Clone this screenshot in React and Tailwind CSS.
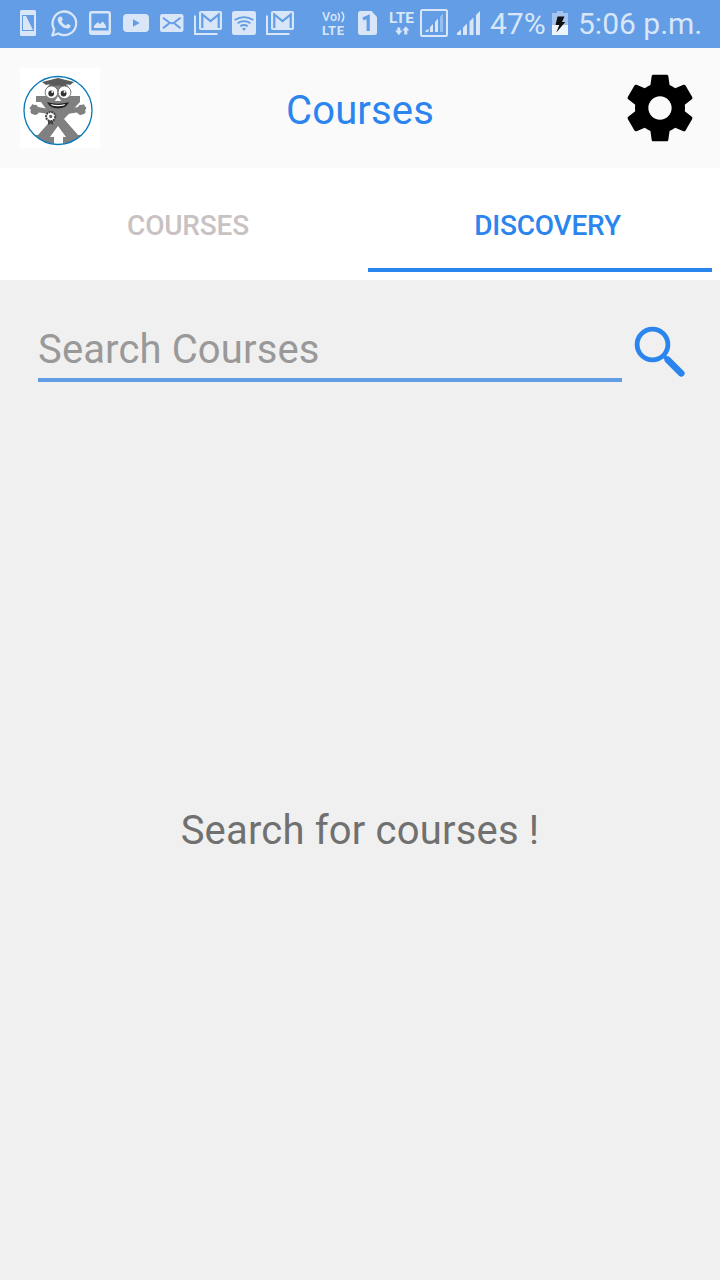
import React from "react";

const GMAIL_BACK = "M195 15.5V34H217.5";

function Slot({ box, width, children }) {
  return (
    <svg className="h-12 shrink-0" width={width} height="48" viewBox={box} fill="none" aria-hidden="true">
      {children}
    </svg>
  );
}

function Gmail({ box }) {
  return (
    <Slot box={box} width={36}>
      <path d={GMAIL_BACK} stroke="#d8e6f8" strokeWidth="2" />
      <rect x="199" y="11" width="23" height="19" rx="1.8" fill="#d8e6f8" />
      <path d="M202.3 28V14.5L210.5 21L218.7 14.5V28" stroke="#629de6" strokeWidth="2.2" />
    </Slot>
  );
}

function StatusBar() {
  return (
    <div className="flex h-12 w-full bg-[#629de6] pl-2.5 text-[#d8e6f8]">
      <Slot box="10 0 36 48" width={36}>
        <rect x="20" y="10" width="16" height="26" rx="1.5" fill="#d8e6f8" />
        <path d="M22 15H34V31H22Z" fill="#629de6" />
        <path d="M23 16H26L33 30H23Z" fill="#d8e6f8" />
      </Slot>
      <Slot box="46 0 36 48" width={36}>
        <path d="M52.3 35.5L54.2 29.3A11.8 11.8 0 1 1 58.4 33.5Z" stroke="#d8e6f8" strokeWidth="2.3" strokeLinejoin="round" />
        <path d="M60 16.5L61.8 16.8L62.8 19.8L61.5 21.5Q63.1 24.4 66 25.5L67.7 23.8L70.5 25.3Q70.8 28.1 67.8 28.6C62.5 28.6 57.6 23 57.7 19.5Q57.7 17.3 60 16.5Z" fill="#d8e6f8" />
      </Slot>
      <Slot box="82 0 36 48" width={36}>
        <rect x="90.2" y="12.2" width="19.6" height="21.6" rx="1.5" stroke="#d8e6f8" strokeWidth="2.4" />
        <path d="M91 30.5H109V34H91Z" fill="#d8e6f8" />
        <path d="M94 28V25.7L98 22L99.7 24.2L102.8 21.5L106 25.7V28Z" fill="#d8e6f8" />
      </Slot>
      <Slot box="118 0 36 48" width={36}>
        <rect x="123" y="14" width="26" height="18" rx="4" fill="#d8e6f8" />
        <path d="M133 19.3V26.7L139.7 23Z" fill="#629de6" />
      </Slot>
      <Slot box="154 0 36 48" width={36}>
        <rect x="160" y="14" width="23.5" height="18" rx="2.2" fill="#d8e6f8" />
        <path d="M163 17.8L169.3 22.5Q171.8 24 174.3 22.5L180.5 17.8M163 28.3L169 23.5M180.5 28.3L174.5 23.5" stroke="#629de6" strokeWidth="2" />
      </Slot>
      <Gmail box="190 0 36 48" />
      <Slot box="226 0 36 48" width={36}>
        <rect x="232" y="11" width="24" height="24" rx="2.5" fill="#d8e6f8" />
        <path d="M234.7 20Q244 14.2 253.3 20M237.6 23.2Q244 19 250.4 23.2M240.3 26.2Q244 23.7 247.7 26.2" stroke="#629de6" strokeWidth="1.9" />
        <path d="M242 28.3Q244 27.3 246 28.3L244 31Z" fill="#629de6" />
      </Slot>
      <Gmail box="190 0 36 48" />

      <div className="ml-[24px] flex w-[28px] shrink-0 flex-col pt-[10px] font-['Roboto',sans-serif] text-[13px] leading-[14px] font-bold">
        <div className="flex h-[14px] items-start text-[12.5px] font-medium">
          <span className="tracking-[0.2px]">Vo</span>
          <svg width="9" height="14" viewBox="0 -0.5 9 14" fill="none" aria-hidden="true">
            <path d="M1 2.5Q3.8 6.5 1 10.3M4.7 1.3Q8.8 6.5 4.7 11.5" stroke="#d8e6f8" strokeWidth="1.5" />
          </svg>
        </div>
        <span className="tracking-[0.5px]">LTE</span>
      </div>
      <Slot box="350 0 36 48" width={36}>
        <path d="M360.5 11H371.5L377 17V32.5Q377 35 374.5 35H360.5Q358 35 358 32.5V13.5Q358 11 360.5 11Z" fill="#d8e6f8" />
        <path d="M363 19L368.2 16.7V31" stroke="#629de6" strokeWidth="3.2" />
      </Slot>
      <div className="flex w-[33px] shrink-0 flex-col pt-[11px] pl-[3px] font-['Roboto',sans-serif] text-[15.5px] leading-[14px] font-bold">
        <span>LTE</span>
        <svg className="ml-[6px] mt-px" width="16" height="11" viewBox="0 0 16 11" fill="#d8e6f8" aria-hidden="true">
          <path d="M2.3 1.5H5.3V4.5H7.4L3.8 9.3L.2 4.5H2.3ZM9.3 8.5V4.5H7.2L10.8 .2L14.4 4.5H12.3V8.5Z" />
        </svg>
      </div>
      <Slot box="419 0 70 48" width={70}>
        <rect x="421" y="10" width="26" height="26" rx="1.5" stroke="#d8e6f8" strokeWidth="2" />
        <path d="M425.5 32V30.5L428.5 29V32ZM430 32V27L433 24V32ZM435 32V22L438 18.5V32Z" fill="#d8e6f8" />
        <path d="M440 32V17L443 13.5V32Z" fill="#97bfef" />
        <path d="M457 35V33L461 29.5V35ZM463 35V27.5L467 23.5V35ZM469.5 35V21.5L473.5 17.5V35ZM476 35V15L480 11V35Z" fill="#d8e6f8" />
      </Slot>
      <span className="w-[62px] shrink-0 pl-px font-['Roboto',sans-serif] text-[30px] leading-[48px] whitespace-nowrap">47%</span>
      <Slot box="551 0 27 48" width={27}>
        <path d="M552 13H557V11H563V13H568V25H552Z" fill="#a3c5f0" />
        <path d="M552 25H568V35H552Z" fill="#edf4fd" />
        <path d="M557.5 16.5H564.5L562 22H565.3L556.3 32.5L559.3 25H555.5Z" fill="#111" />
      </Slot>
      <span className="shrink-0 font-['Roboto',sans-serif] text-[30px] leading-[48px] whitespace-nowrap">5:06 p.m.</span>
    </div>
  );
}

function Mascot() {
  return (
    <svg className="h-20 w-20" viewBox="0 0 80 80" aria-label="Profile">
      <rect width="80" height="80" fill="#fff" />
      <g fill="#808080">
        <path d="M16 28H60V34L44 51L58 67H62Q51 76 43 76V69H46L38 58L30 69H34V76Q24 76 14 67H18L33 50L26 41L21 34H16Z" />
        <path d="M18 39L29 41V46L19 44.5Q17 48 13.5 46.5Q9 45 11 42Q8 40 11.5 38Q11 35 14.5 37Q16.5 36 18 39Z" />
        <path d="M58 39L47 41V46L57 44.5Q59 48 62.5 46.5Q67 45 65 42Q68 40 64.5 38Q65 35 61.5 37Q59.5 36 58 39Z" />
        <rect x="27" y="14" width="22" height="28" rx="8" />
      </g>
      <path d="M22 14L38 10L54 14L50 17L46 16V19Q38 16 30 19V16L26 17Z" fill="#5a5a5a" />
      <circle cx="31.5" cy="24.3" r="6.4" fill="#fff" stroke="#777" strokeWidth="1" />
      <circle cx="44.5" cy="24.3" r="6.4" fill="#fff" stroke="#777" strokeWidth="1" />
      <circle cx="31.2" cy="25.5" r="2.9" fill="#333" />
      <circle cx="43.6" cy="25.5" r="2.9" fill="#333" />
      <circle cx="32.3" cy="24" r="1" fill="#fff" />
      <circle cx="44.5" cy="24" r="1" fill="#fff" />
      <path d="M34.8 33L38 28.5L41.2 33Z" fill="#fff" />
      <path d="M27 34.3Q38 37 49 34.3Q46 40.5 38 40.5Q30 40.5 27 34.3Z" fill="#222" />
      <path d="M30.5 36Q38 37.8 45.5 36L44 37.6Q38 39 32 37.6Z" fill="#fff" />
      <path d="M28 52V57L30.5 55.5L33 57V52Z" fill="#444" />
      <circle cx="30.7" cy="48.5" r="4.6" fill="#fff" stroke="#444" strokeWidth="2" strokeDasharray="2 .7" />
      <circle cx="30.7" cy="48.5" r="1.7" fill="#666" />
      <circle cx="38" cy="42.5" r="34" fill="none" stroke="#0878b8" strokeWidth="1.3" />
    </svg>
  );
}

export default function App() {
  return (
    <div className="flex h-[1280px] w-[720px] flex-col overflow-hidden bg-[#f0f0f0] font-['Roboto',sans-serif]">
      <StatusBar />
      <header className="flex h-[120px] shrink-0 items-center justify-between bg-[#fafafa] px-5">
        <Mascot />
        <h1 className="pt-1.5 text-[40px] leading-[48px] tracking-[0.15px] text-[#2b85ee]">Courses</h1>
        <svg className="h-20 w-20" viewBox="0 0 24 24" fill="#000" aria-label="Settings">
          <path d="M19.43 12.98c.04-.32.07-.64.07-.98s-.03-.66-.07-.98l2.11-1.65c.19-.15.24-.42.12-.64l-2-3.46c-.12-.22-.39-.3-.61-.22l-2.49 1c-.52-.4-1.08-.73-1.69-.98l-.38-2.65C14.46 2.18 14.25 2 14 2h-4c-.25 0-.46.18-.49.42l-.38 2.65c-.61.25-1.17.59-1.69.98l-2.49-1c-.23-.09-.49 0-.61.22l-2 3.46c-.13.22-.07.49.12.64l2.11 1.65c-.04.32-.07.65-.07.98s.03.66.07.98l-2.11 1.65c-.19.15-.24.42-.12.64l2 3.46c.12.22.39.3.61.22l2.49-1c.52.4 1.08.73 1.69.98l.38 2.65c.03.24.24.42.49.42h4c.25 0 .46-.18.49-.42l.38-2.65c.61-.25 1.17-.59 1.69-.98l2.49 1c.23.09.49 0 .61-.22l2-3.46c.12-.22.07-.49-.12-.64l-2.11-1.65zM12 15.5c-1.93 0-3.5-1.57-3.5-3.5s1.57-3.5 3.5-3.5 3.5 1.57 3.5 3.5-1.57 3.5-3.5 3.5z" />
        </svg>
      </header>
      <nav className="flex h-28 shrink-0 bg-white px-2 pb-2 text-[28px] leading-[32px] font-medium tracking-[-0.2px]">
        <div className="flex w-[360px] items-center justify-center pt-3 text-[#c9c2c2]">COURSES</div>
        <div className="flex flex-1 items-center justify-center border-b-4 border-[#2b85ee] pt-4 text-[#2b85ee]">
          <span className="pl-[15px]">DISCOVERY</span>
        </div>
      </nav>
      <div className="flex h-[102px] shrink-0 pl-[38px]">
        <div className="flex w-[584px] items-end border-b-4 border-[#629de6] pb-[3px] text-[40px] leading-[50px] tracking-[0.13px] text-[#999]">
          Search Courses
        </div>
        <svg className="mt-10 ml-2 h-[60px] w-[60px]" viewBox="630 320 60 60" fill="none" stroke="#2b85ee" aria-label="Search">
          <circle cx="652.5" cy="344.5" r="15.4" strokeWidth="4.8" />
          <path d="M663.5 355.5L668 360" strokeWidth="4" />
          <path d="M667.8 359.8L681.3 373.3" strokeWidth="6.6" strokeLinecap="round" />
        </svg>
      </div>
      <main className="flex flex-1 justify-center pt-[425px] text-[40px] leading-[48px] tracking-[0.18px] text-[#707070]">
        <p>Search for courses !</p>
      </main>
    </div>
  );
}
